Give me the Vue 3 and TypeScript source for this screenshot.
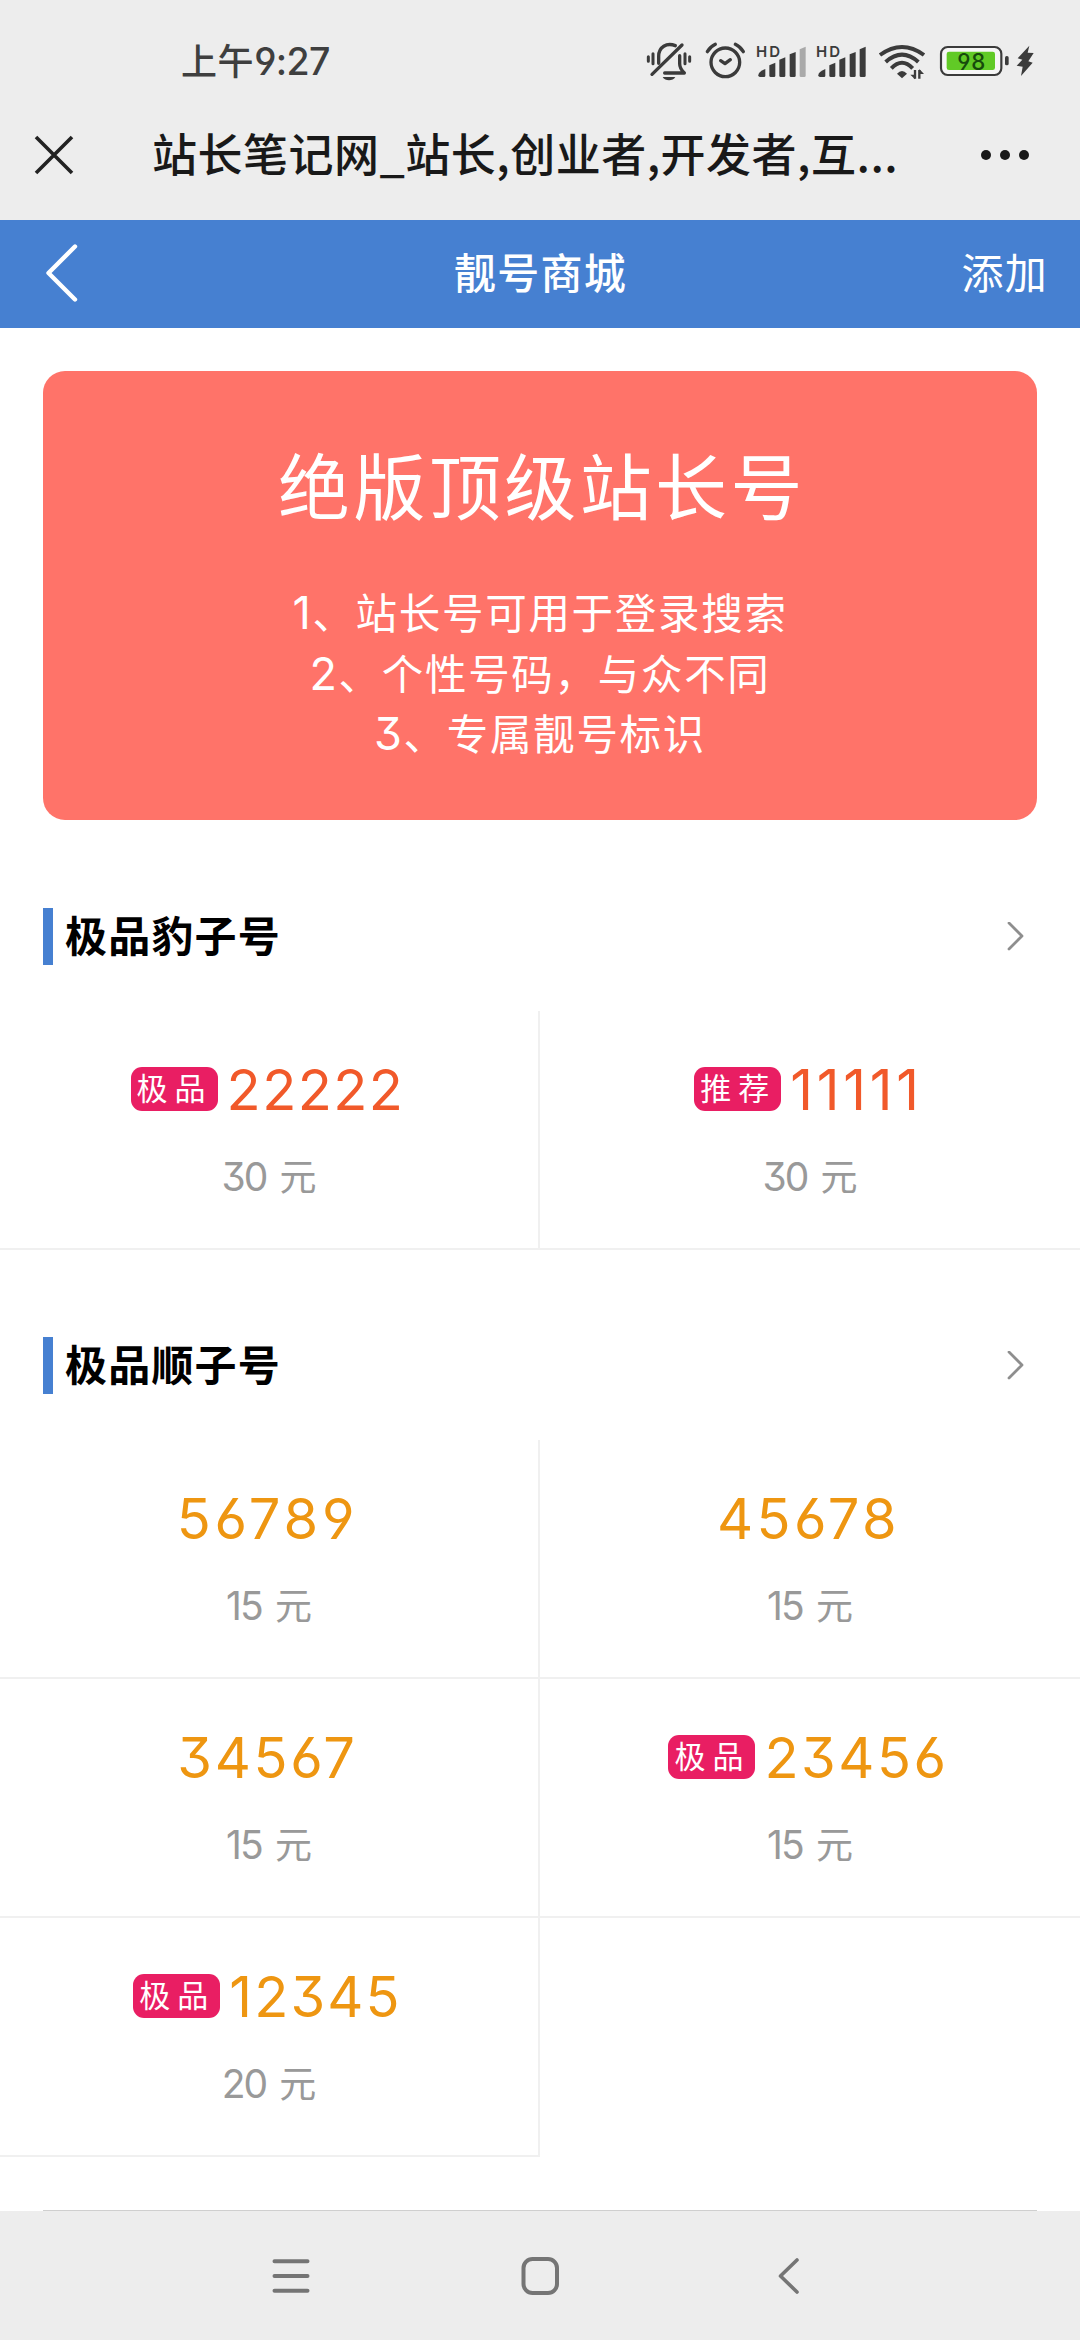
<script setup lang="ts">
interface Item {
  number: string
  price: number
  tracking: number
  tag?: string
}

interface Section {
  title: string
  tone: string
  items: Item[]
}

const rules: string[][] = [
  ['1', '、站长号可用于登录搜索'],
  ['2', '、个性号码，与众不同'],
  ['3', '、专属靓号标识'],
]

const sections: Section[] = [
  {
    title: '极品豹子号',
    tone: 'orange',
    items: [
      { number: '22222', price: 30, tracking: 1.4, tag: '极品' },
      { number: '11111', price: 30, tracking: 3.7, tag: '推荐' },
    ],
  },
  {
    title: '极品顺子号',
    tone: 'amber',
    items: [
      { number: '56789', price: 15, tracking: 3.8 },
      { number: '45678', price: 15, tracking: 3.4 },
      { number: '34567', price: 15, tracking: 2.7 },
      { number: '23456', price: 15, tracking: 2.5, tag: '极品' },
      { number: '12345', price: 20, tracking: 2.1, tag: '极品' },
    ],
  },
]
</script>

<template>
  <div class="screen">
    <header class="status">
      <span class="clock">上午<span class="digits">9:27</span></span>
      <div class="status-icons">
        <!-- muted / vibrate bell -->
        <svg class="bell" width="46" height="42" viewBox="78 66 138 126" fill="none" stroke="#3b3b3b" stroke-width="9" stroke-linecap="round">
          <path d="M85 113V127M99 104V134M195 104V134M209 113V127" />
          <path d="M116 133V112C116 84 140 70 166 80" stroke-width="10" />
          <path d="M96 166L186 78" stroke-width="10" />
          <path d="M134 162H193C184 153 179 146 179 134V110" stroke-width="10" stroke-linejoin="round" />
          <path d="M128 174H166C159 187 135 187 128 174Z" fill="#3b3b3b" stroke="none" />
        </svg>
        <svg class="alarm" width="41" height="42" viewBox="255 66 123 126" fill="none" stroke="#3b3b3b" stroke-width="10" stroke-linecap="round" stroke-linejoin="round">
          <circle cx="316" cy="130" r="43" />
          <path d="M302 125L315 134L331 122" />
          <path d="M262 98Q271 83 286 76M370 98Q361 83 346 76" />
        </svg>
        <svg class="signal" width="50" height="42" viewBox="408 66 150 126" fill="#3b3b3b">
          <text x="408" y="113" class="hd" textLength="72">HD</text>
          <path d="M415 169Q415 158 436 150V170Q436 174 432 174H420Q415 174 415 169Z" />
          <path d="M448 139L466 131V170Q466 174 462 174H452Q448 174 448 170Z" />
          <path d="M478 122L496 115V170Q496 174 492 174H482Q478 174 478 170Z" />
          <path d="M509 106L527 99V170Q527 174 523 174H513Q509 174 509 170Z" />
          <path d="M539 91L557 83V170Q557 174 553 174H543Q539 174 539 170Z" fill="#a9a9a9" />
        </svg>
        <svg class="signal" width="50" height="42" viewBox="408 66 150 126" fill="#3b3b3b">
          <text x="408" y="113" class="hd" textLength="72">HD</text>
          <path d="M415 169Q415 158 436 150V170Q436 174 432 174H420Q415 174 415 169Z" />
          <path d="M448 139L466 131V170Q466 174 462 174H452Q448 174 448 170Z" />
          <path d="M478 122L496 115V170Q496 174 492 174H482Q478 174 478 170Z" />
          <path d="M509 106L527 99V170Q527 174 523 174H513Q509 174 509 170Z" />
          <path d="M539 91L557 83V170Q557 174 553 174H543Q539 174 539 170Z" />
        </svg>
        <svg class="wifi" width="48" height="42" viewBox="774 66 144 126" fill="none" stroke="#3b3b3b" stroke-width="12">
          <path d="M780 108Q846 60 912 108" />
          <path d="M797 129Q846 85 895 129" />
          <path d="M814 148Q846 115 878 148" />
          <path d="M831 164Q846 148 861 164L846 178Z" fill="#3b3b3b" stroke="none" />
          <path d="M885 153V179M898 179V153" stroke-width="7" />
          <path d="M871 167L885 181V167ZM912 165L898 150V165Z" fill="#3b3b3b" stroke="none" />
        </svg>
        <svg class="battery" width="71" height="42" viewBox="957 66 213 126">
          <rect x="963" y="84" width="181" height="84" rx="20" fill="#f6f6f6" stroke="#3b3b3b" stroke-width="6.5" />
          <rect x="980" y="98" width="145" height="55" rx="7" fill="#61ca26" />
          <rect x="1155" y="111" width="11" height="28" rx="5" fill="#3b3b3b" />
          <text x="1012" y="153" class="level" textLength="84">98</text>
        </svg>
        <svg class="bolt" width="20" height="42" viewBox="1185 66 60 126" fill="#3b3b3b">
          <path d="M1228 80L1193 118L1207 122L1190 140L1208 143L1203 171L1238 131L1225 127L1241 102L1223 101Z" />
        </svg>
      </div>
    </header>

    <div class="titlebar">
      <svg class="close" width="40" height="40" viewBox="0 0 40 40" fill="none" stroke="#222" stroke-width="3.6">
        <path d="M2 2L38 38M38 2L2 38" />
      </svg>
      <span class="page-title">站长笔记网_站长,创业者,开发者,互...</span>
      <svg class="more" width="50" height="12" viewBox="0 0 50 12" fill="#191919">
        <circle cx="6" cy="6" r="5" /><circle cx="25" cy="6" r="5" /><circle cx="44" cy="6" r="5" />
      </svg>
    </div>

    <nav class="navbar">
      <svg width="34" height="60" viewBox="0 0 34 60" fill="none" stroke="#fff" stroke-width="4.4" stroke-linecap="round" stroke-linejoin="round">
        <path d="M30 2.5L3.5 29L30 55.5" />
      </svg>
      <h1>靓号商城</h1>
      <span class="add">添加</span>
    </nav>

    <main>
      <section class="banner">
        <h2>绝版顶级站长号</h2>
        <p v-for="rule in rules" :key="rule[0]"><span class="digits">{{ rule[0] }}</span>{{ rule[1] }}</p>
      </section>

      <section v-for="section in sections" :key="section.title" class="group">
        <div class="group-head">
          <h3>{{ section.title }}</h3>
          <svg width="18" height="30" viewBox="0 0 18 30" fill="none" stroke="#8e8e8e" stroke-width="2.8" stroke-linecap="round" stroke-linejoin="round">
            <path d="M2 1L15 14L2 27" />
          </svg>
        </div>
        <div class="grid">
          <div v-for="item in section.items" :key="item.number" class="cell">
            <div class="number" :class="section.tone">
              <span v-if="item.tag" class="tag">{{ item.tag }}</span>
              <span class="digits" :style="{ letterSpacing: item.tracking + 'px' }">{{ item.number }}</span>
            </div>
            <div class="price"><span class="digits">{{ item.price }}</span> 元</div>
          </div>
        </div>
      </section>
      <div class="rule"></div>
    </main>

    <footer class="system-nav">
      <svg width="40" height="40" viewBox="0 0 40 40" fill="none" stroke="#757575" stroke-width="4" stroke-linecap="round">
        <path d="M3.5 5.2H36.5M3.5 20H36.5M3.5 34.8H36.5" />
      </svg>
      <svg width="40" height="40" viewBox="0 0 40 40" fill="none" stroke="#757575" stroke-width="4">
        <rect x="3.5" y="3" width="33.5" height="34" rx="9" />
      </svg>
      <svg width="40" height="40" viewBox="0 0 40 40" fill="none" stroke="#757575" stroke-width="3.6" stroke-linecap="round" stroke-linejoin="round">
        <path d="M28 4L11.5 20L28 36" />
      </svg>
    </footer>
  </div>
</template>

<style>
body {
  margin: 0;
  background: #fff;
}
</style>

<style scoped>
.screen {
  width: 1080px;
  height: 2340px;
  display: flex;
  flex-direction: column;
  overflow: hidden;
  background: #fff;
  font-family: "Noto Sans CJK SC", sans-serif;
  color: #000;
}

svg {
  display: block;
  flex: none;
}

h1, h2, h3, p {
  margin: 0;
}

.digits {
  font-family: Inter, sans-serif;
  font-feature-settings: "cv03", "cv04", "cv09";
}

.status {
  height: 56px;
  padding: 34px 45px 0 181px;
  display: flex;
  align-items: center;
  justify-content: space-between;
  background: #ededed;
}

.clock {
  padding-bottom: 3px;
  font-size: 36px;
  line-height: 53px;
  font-weight: 500;
  color: #3f3f3f;
  letter-spacing: 0.6px;
}

.clock .digits {
  font-size: 37.5px;
  letter-spacing: -0.6px;
}

.status-icons {
  display: flex;
  align-items: center;
}

.alarm { margin-left: 13px; }
.signal { margin-left: 10px; }
.wifi { margin-left: 12px; }
.battery { margin-left: 13px; }
.bolt { margin-left: 5px; }

.hd {
  font: 600 45px Inter, sans-serif;
}

.level {
  font: 500 67px Inter, sans-serif;
  font-feature-settings: "cv04";
  fill: #174a0c;
}

.titlebar {
  height: 130px;
  padding: 0 50px 0 34px;
  display: flex;
  align-items: center;
  background: #ededed;
}

.page-title {
  flex: 1;
  margin-left: 78px;
  padding-bottom: 5px;
  font-size: 45px;
  font-weight: 500;
  letter-spacing: 0.5px;
  color: #191919;
  white-space: nowrap;
}

.navbar {
  height: 108px;
  padding: 0 32px 0 33px;
  display: grid;
  grid-template-columns: 1fr auto 1fr;
  align-items: center;
  background: #4680d1;
  color: #fff;
}

.navbar svg {
  margin-left: 12px;
}

.navbar h1 {
  padding-bottom: 8px;
  font-size: 42px;
  font-weight: 500;
  letter-spacing: 1.2px;
}

.add {
  justify-self: end;
  padding-bottom: 8px;
  font-size: 42px;
  letter-spacing: 1.2px;
}

main {
  height: 1883px;
}

.banner {
  height: 377px;
  margin: 43px 43px 1px;
  padding-top: 72px;
  border-radius: 22px;
  background: #ff7369;
  color: #fff;
  text-align: center;
}

.banner h2 {
  margin-bottom: 58px;
  padding-left: 4px;
  font-size: 72px;
  line-height: 80px;
  font-weight: 400;
  letter-spacing: 3.4px;
}

.banner p {
  height: 60.5px;
  font-size: 41.5px;
  line-height: 60.5px;
  letter-spacing: 1.7px;
}

.banner .digits {
  font-size: 45px;
  line-height: 1;
}

.group {
  padding-top: 87px;
}

.group-head {
  height: 57px;
  margin: 0 55px 46px 43px;
  padding-left: 12px;
  display: flex;
  align-items: center;
  justify-content: space-between;
  border-left: 10px solid #4680d1;
}

.group-head h3 {
  padding-bottom: 6px;
  font-size: 42px;
  line-height: 51px;
  font-weight: 700;
  letter-spacing: 1.2px;
}

.grid {
  display: grid;
  grid-template-columns: 1fr 1fr;
}

.cell {
  box-sizing: border-box;
  height: 239px;
  padding-top: 45px;
  border-bottom: 2px solid #f0f0f0;
  text-align: center;
}

.cell:nth-child(odd) {
  border-right: 2px solid #f0f0f0;
}

.number {
  height: 69px;
  padding-right: 3px;
  display: flex;
  align-items: center;
  justify-content: center;
  gap: 9px;
  font-size: 56px;
  line-height: 69px;
}

.orange { color: #f1592a; }
.amber { color: #ee9611; }

.tag {
  width: 81px;
  height: 44px;
  margin-bottom: 4px;
  padding-left: 6px;
  border-radius: 11px;
  background: #e91e63;
  color: #fff;
  font-size: 31px;
  line-height: 40px;
  letter-spacing: 7px;
  text-align: left;
  white-space: nowrap;
}

.price {
  height: 60px;
  margin-top: 20px;
  font-size: 37px;
  line-height: 60px;
  word-spacing: 5px;
  color: #999;
}

.price .digits {
  font-size: 39px;
  line-height: 1;
  letter-spacing: -2px;
}

.rule {
  height: 1px;
  margin: 53px 43px 0;
  background: #cfcfcf;
}

.system-nav {
  height: 129px;
  display: flex;
  align-items: center;
  justify-content: center;
  gap: 209px;
  background: #ededed;
}
</style>
